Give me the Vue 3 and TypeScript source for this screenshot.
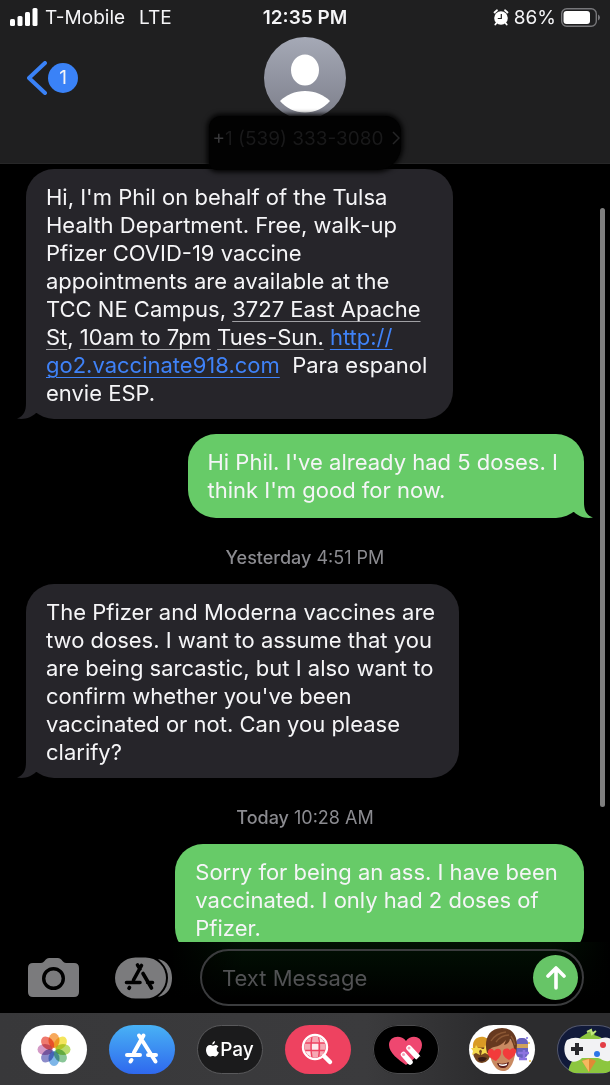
<script setup lang="ts">
import { ref } from 'vue'

interface Part {
  text: string
  kind?: 'data' | 'url'
}
interface Message {
  id: number
  from: 'them' | 'me'
  size: string
  tail: boolean
  stamp?: { day: string; time: string }
  lines: Part[][]
}

const plain = (...rows: string[]): Part[][] => rows.map((text) => [{ text }])

const messages: Message[] = [
  {
    id: 1,
    from: 'them',
    size: 'w70',
    tail: true,
    lines: [
      ...plain(
        "Hi, I'm Phil on behalf of the Tulsa",
        'Health Department. Free, walk-up',
        'Pfizer COVID-19 vaccine',
        'appointments are available at the',
      ),
      [{ text: 'TCC NE Campus, ' }, { text: '3727 East Apache', kind: 'data' }],
      [
        { text: 'St', kind: 'data' },
        { text: ', ' },
        { text: '10am to 7pm', kind: 'data' },
        { text: ' ' },
        { text: 'Tues-Sun.', kind: 'data' },
        { text: ' ' },
        { text: 'http://', kind: 'url' },
      ],
      [{ text: 'go2.vaccinate918.com', kind: 'url' }, { text: '  Para espanol' }],
      [{ text: 'envie ESP.' }],
    ],
  },
  {
    id: 2,
    from: 'me',
    size: 'w65',
    tail: true,
    lines: plain("Hi Phil. I've already had 5 doses. I", "think I'm good for now."),
  },
  {
    id: 3,
    from: 'them',
    size: 'w71',
    tail: true,
    stamp: { day: 'Yesterday', time: '4:51 PM' },
    lines: plain(
      'The Pfizer and Moderna vaccines are',
      'two doses. I want to assume that you',
      'are being sarcastic, but I also want to',
      "confirm whether you've been",
      'vaccinated or not. Can you please',
      'clarify?',
    ),
  },
  {
    id: 4,
    from: 'me',
    size: 'w67',
    tail: false,
    stamp: { day: 'Today', time: '10:28 AM' },
    lines: plain('Sorry for being an ass. I have been', 'vaccinated. I only had 2 doses of', 'Pfizer.'),
  },
]

const petals = ['#f6a04a', '#f3e34a', '#b2d95c', '#7cc08c', '#70aee6', '#7f7fc4', '#cf8fc0', '#ee6a5e']
const draft = ref('')
</script>

<template>
  <div class="phone">
    <header class="top">
      <div class="status">
        <div class="side">
          <svg class="signal" viewBox="0 0 28 18" aria-hidden="true">
            <rect x="0" y="11" width="5" height="7" rx="1.5" />
            <rect x="7.500" y="8" width="5" height="10" rx="1.5" />
            <rect x="15" y="4" width="5" height="14" rx="1.5" />
            <rect x="22.500" y="0" width="5" height="18" rx="1.5" />
          </svg>
          <span>T-Mobile</span>
          <span class="net">LTE</span>
        </div>
        <strong class="clock">12:35 PM</strong>
        <div class="side end">
          <svg class="alarm" viewBox="0 0 16 17" aria-hidden="true">
            <circle cx="8" cy="9" r="6.800" fill="#fff" />
            <path d="M1.500 3.500 4 1.300M14.500 3.500 12 1.300M3.500 14 2.300 15.500M12.500 14 13.700 15.500" stroke="#fff" stroke-width="1.800" stroke-linecap="round" />
            <path d="M8.300 5V9.500H4.800" stroke="#1f1f20" stroke-width="1.200" fill="none" />
          </svg>
          <span>86%</span>
          <svg class="battery" viewBox="0 0 39 19" aria-hidden="true">
            <rect x="0.700" y="0.700" width="34.600" height="17.600" rx="5" fill="none" stroke="#77777a" stroke-width="1.400" />
            <rect x="2.500" y="3" width="26.500" height="13" rx="3" fill="#fff" />
            <path d="M37 6.500q2 1 2 3t-2 3z" fill="#77777a" />
          </svg>
        </div>
      </div>
      <div class="nav">
        <button class="back" aria-label="Back, 1 unread">
          <svg viewBox="0 0 20 34" aria-hidden="true">
            <path d="M18 2 2 17 18 32" fill="none" stroke="#3a82f7" stroke-width="4" stroke-linecap="round" stroke-linejoin="round" />
          </svg>
          <span class="unread">1</span>
        </button>
        <div class="contact">
          <svg class="avatar" viewBox="0 0 82 82" aria-hidden="true">
            <defs>
              <linearGradient id="av" x1="0" y1="0" x2="0" y2="1">
                <stop offset="0" stop-color="#a5a9b6" />
                <stop offset="1" stop-color="#7d7f8b" />
              </linearGradient>
            </defs>
            <circle cx="41" cy="41" r="41" fill="url(#av)" />
            <ellipse cx="41" cy="33" rx="14" ry="15.500" fill="#fff" />
            <path d="M16 64C22 58 31 54 41 54S60 58 66 64C60 71 51 75.500 41 75.500S22 71 16 64Z" fill="#fff" />
          </svg>
          <div class="number">
            <span><b>+</b>1 (539) 333-3080</span>
            <svg viewBox="0 0 8 14" aria-hidden="true"><path d="M1 1 7 7 1 13" fill="none" stroke="#252526" stroke-width="1.500" /></svg>
          </div>
        </div>
      </div>
    </header>

    <main class="thread">
      <template v-for="m in messages" :key="m.id">
        <p v-if="m.stamp" class="stamp"><b>{{ m.stamp.day }}</b> {{ m.stamp.time }}</p>
        <div class="bubble" :class="[m.from, m.size]">
          <p v-for="(line, i) in m.lines" :key="i" class="line"><template v-for="(part, j) in line" :key="j"><a v-if="part.kind" href="#" :class="part.kind">{{ part.text }}</a><template v-else>{{ part.text }}</template></template></p>
          <svg v-if="m.tail" class="tail" viewBox="0 0 30 32" aria-hidden="true">
            <path d="M9 0V16C9 24 7 29 0 31.500C8 33 15 30 19 26L30 27V0Z" />
          </svg>
        </div>
      </template>
      <div class="scroll" aria-hidden="true"></div>
    </main>

    <form class="composer" @submit.prevent>
      <button type="button" class="tool" aria-label="Camera">
        <svg width="51" height="40" viewBox="0 0 51 40">
          <path d="M5 5H13Q15 5 16.500 3L17.500 1.700Q19 0 21 0H30Q32 0 33.500 1.700L34.500 3Q36 5 38 5H46Q51 5 51 10V34Q51 39 46 39H5Q0 39 0 34V10Q0 5 5 5Z" fill="#7b7b7d" />
          <circle cx="25.500" cy="20.500" r="9.800" fill="none" stroke="#000" stroke-width="3.400" />
        </svg>
      </button>
      <button type="button" class="tool store" aria-label="Apps">
        <svg width="58" height="42" viewBox="0 0 58 42">
          <path d="M43 2C53 4 57 12 57 21S53 38 43 40C48 35 51 29 51 21S48 7 43 2Z" fill="#7b7b7d" />
          <rect x="-1" y="-1" width="54" height="44" rx="22" fill="#000" />
          <rect x="0" y="0.500" width="51" height="41" rx="20.500" fill="#7b7b7d" />
          <g stroke="#000" stroke-width="3.600" stroke-linecap="round" fill="none">
            <path d="M26.500 8.500 18.500 23M22.500 8 25 12M28 16.500 36.500 31M11.500 25.500H25M32.500 25.500H37.500M14.500 30.500 14 31.300" />
          </g>
        </svg>
      </button>
      <div class="field">
        <input v-model="draft" type="text" aria-label="Text Message" placeholder="Text Message" />
        <button class="send" aria-label="Send">
          <svg width="20" height="24" viewBox="0 0 20 24">
            <path d="M10 22V2.500M2 10 10 2 18 10" fill="none" stroke="#fff" stroke-width="3.600" stroke-linecap="round" stroke-linejoin="round" />
          </svg>
        </button>
      </div>
    </form>

    <nav class="drawer" aria-label="Message apps">
      <button class="app photos" aria-label="Photos">
        <svg viewBox="0 0 66 48">
          <ellipse v-for="(c, i) in petals" :key="c" class="petal" cx="33" cy="15.500" rx="5.500" ry="7.500" :fill="c" :transform="`rotate(${i * 45} 33 24.500)`" />
        </svg>
      </button>
      <button class="app appstore" aria-label="App Store">
        <svg viewBox="0 0 66 48">
          <g stroke="#fff" stroke-width="4" stroke-linecap="round" fill="none">
            <path d="M34.500 10.500 25 27.500M30 10.500 46.500 36.500M18 30H31M39 30H47M22.500 35 21.500 36.500" />
          </g>
        </svg>
      </button>
      <button class="app pay" aria-label="Apple Pay">
        <svg class="apple" viewBox="0 0 13 16">
          <path d="M9 0C9.200 1.800 7.900 3.400 6.300 3.500C6.100 1.900 7.400.3 9 0ZM6.600 4.700C7.400 4.700 8.300 3.900 9.500 3.900C10.700 3.900 11.800 4.500 12.400 5.400C9.900 6.900 10.300 10.300 12.900 11.300C12.200 13.200 11 15.500 9.400 15.500C8.400 15.500 8 14.900 6.800 14.900S5.200 15.500 4.200 15.500C2.100 15.500 0 12 0 9C0 5.700 2 4 4 4C5.200 4 6 4.700 6.600 4.700Z" fill="#fff" />
        </svg>
        <span>Pay</span>
      </button>
      <button class="app images" aria-label="Images">
        <svg viewBox="0 0 66 48">
          <defs><clipPath id="lens"><circle cx="30" cy="22" r="10.500" /></clipPath></defs>
          <g clip-path="url(#lens)">
            <rect x="19" y="11" width="22" height="22" fill="#f6a8b4" />
            <path d="M27 18H33V25H27ZM33 11H41V18H33ZM19 25H27V33H19Z" fill="#fde9ec" />
            <path d="M27 11Q25 22 27 33M33.500 11Q35.500 22 33.500 33M19 18H41M19 25.500H41" stroke="#ee4260" stroke-width="1.400" fill="none" />
          </g>
          <circle cx="30" cy="22" r="12" fill="none" stroke="#fff" stroke-width="2.400" />
          <path d="M39 31 45 37" stroke="#fff" stroke-width="4.500" stroke-linecap="round" />
        </svg>
      </button>
      <button class="app touch" aria-label="Digital Touch">
        <svg viewBox="0 0 66 48">
          <path d="M33 40C26 35 16 28 16 20C16 11 28 9 33 16C38 9 49 11 49 20C49 28 40 35 33 40Z" fill="#ef4770" />
          <path d="M30.500 29.500 37 37M36 23 44.500 32" stroke="#fff" stroke-width="5.500" stroke-linecap="round" />
          <circle cx="30.500" cy="29.500" r="1.500" fill="#f6a0b5" /><circle cx="36" cy="23" r="1.500" fill="#f6a0b5" />
          <path d="M41 39 48 32" stroke="#000" stroke-width="3" />
        </svg>
      </button>
      <span class="rule"></span>
      <button class="app memoji" aria-label="Memoji">
        <svg viewBox="0 0 66 48">
          <ellipse cx="13" cy="27" rx="9" ry="11" fill="#75461f" />
          <path d="M4 23C3 14 9 11 15 12L22 15V22Z" fill="#d99b25" />
          <path d="M7 20 9 23 13 23 10 26 11 30 7 28 3 30 4 26 2 23 6 23ZM16 20 18 24H21L19 27 20 30 16 28 12 30 13 26 11 24H15Z" fill="#f5d84c" />
          <path d="M9 33Q13 31 18 33 15 38 10 36Z" fill="#3a1b16" />
          <rect x="47" y="13" width="12" height="20" rx="5" fill="#6861bd" />
          <path d="M47 19H59V23H47Z" fill="#d0a25a" /><path d="M49 28H60M55 25V35M50 34H58" stroke="#8d74e0" stroke-width="2.500" />
          <circle cx="60" cy="18" r="1" fill="#e5bd48" /><circle cx="58" cy="13" r="1" fill="#7b6ee0" /><circle cx="61" cy="36" r="1" fill="#e5bd48" />
          <path d="M21 18Q33 8 46 18V30Q43 46 34 46T21 31Z" fill="#c98a61" />
          <path d="M18 28C15 17 18 3 33 3C46 3 50 15 47 28L45 25C45 20 43 16 41 14Q40 19 35 20L37 15Q32 21 25 22 20 23 20 28Z" fill="#67391f" />
          <path d="M22 16Q27 8 37 7M27 17Q32 10 40 10M42 11Q45 15 46 20" stroke="#8b5734" stroke-width="1.300" fill="none" />
          <path d="M27 36C22 34 17 30 19 26C20 23 24 23 25 26C28 22 33 24 32 28C32 31 29 34 27 36ZM40 35C36 33 33 30 34 26C35 23 39 23 41 25C43 22 48 23 47 27C46 31 43 33 40 35Z" fill="#f23b3b" />
          <path d="M28 38Q34 40 40 37 39 43 34 43T28 38Z" fill="#5b1e1b" /><path d="M30 39Q34 40 38 38.500V40Q34 42 30 40Z" fill="#fff" />
        </svg>
      </button>
      <button class="app pigeon" aria-label="GamePigeon">
        <svg viewBox="0 0 66 48">
          <path d="M20 16C23 12 30 8 35 6Q39 9 37 10C44 12 47 14 50 18H20ZM11 48Q13 32 25 31H48Q56 36 58 48Z" fill="#8cc63f" />
          <path d="M30 7 34 5 35 9 39 6" stroke="#c0e77b" stroke-width="2" fill="none" />
          <path d="M10 15Q18 11 24 14H42Q50 10 57 16C62 24 60 35 52 36C47 37 45 34 41 33H25C20 38 13 38 10 33C6 27 7 19 10 15Z" fill="#f2f2f4" />
          <path d="M14 24H26M20 18V30" stroke="#29292d" stroke-width="4" />
          <circle cx="46" cy="20" r="3" fill="#e33d46" /><circle cx="40" cy="29" r="3" fill="#2c76e8" />
          <path d="M25 36Q32 31 39 36L32 47Z" fill="#e08a35" /><path d="M32 34V47L25 36Z" fill="#f6b85f" />
        </svg>
      </button>
    </nav>
  </div>
</template>

<style>
body {
  background: #000;
}
</style>

<style scoped>
.phone {
  height: 100vh;
  display: flex;
  flex-direction: column;
  overflow: hidden;
  background: #000;
  color: #f5f5f7;
  font-family: Inter, Roboto, "Liberation Sans", sans-serif;
}
button {
  border: 0;
  padding: 0;
  margin: 0;
  background: none;
  color: inherit;
  font: inherit;
}
svg {
  display: block;
}
.top {
  flex: none;
  background: #1f1f20;
  border-bottom: 1px solid #272728;
}
.status {
  display: grid;
  grid-template-columns: 1fr auto 1fr;
  align-items: center;
  height: 34px;
  padding: 0 10px;
  font-size: 19px;
}
.side {
  display: flex;
  align-items: center;
  gap: 7px;
}
.end {
  justify-content: flex-end;
  gap: 5px;
}
.net {
  margin-left: 7px;
}
.clock {
  font-weight: 600;
}
.signal {
  width: 28px;
  height: 18px;
  fill: #fff;
}
.alarm {
  width: 16px;
  height: 17px;
}
.battery {
  width: 39px;
  height: 19px;
}
.nav {
  display: grid;
  grid-template-columns: 1fr auto 1fr;
  height: 129px;
  padding-top: 3px;
  box-sizing: border-box;
}
.back {
  display: flex;
  align-items: center;
  gap: 1px;
  height: 82px;
  padding-left: 27px;
}
.back svg {
  width: 20px;
  height: 34px;
}
.unread {
  width: 30px;
  height: 30px;
  line-height: 30px;
  border-radius: 50%;
  background: #3a82f7;
  font-size: 19px;
}
.contact {
  position: relative;
  width: 82px;
  display: flex;
  flex-direction: column;
  align-items: center;
}
.avatar {
  width: 82px;
  height: 82px;
  flex: none;
}
.number {
  position: absolute;
  top: 79px;
  z-index: 2;
  display: flex;
  align-items: center;
  justify-content: center;
  gap: 8px;
  width: 192px;
  height: 54px;
  padding: 0 0 10px 2px;
  box-sizing: border-box;
  border-radius: 12px 16px 24px 8px;
  background: #020202;
  box-shadow: 0 0 5px 2px #020202;
  color: #19191a;
  font-size: 19px;
  white-space: nowrap;
}
.number b {
  font-weight: 400;
  color: #38383a;
}
.number svg {
  width: 8px;
  height: 14px;
}
.thread {
  flex: 1;
  min-height: 0;
  position: relative;
  overflow: hidden;
  display: flex;
  flex-direction: column;
  padding: 5px 26px 0;
}
.bubble {
  position: relative;
  flex: none;
  box-sizing: border-box;
  padding: 14px 0 12px 20px;
  border-radius: 28px;
  font-size: 22px;
  line-height: 28px;
  white-space: pre;
}
.bubble + .bubble {
  margin-top: 15px;
}
.line {
  margin: 0;
}
.them {
  align-self: flex-start;
  background: #26252a;
  fill: #26252a;
}
.me {
  align-self: flex-end;
  padding-bottom: 14px;
  background: #67cb68;
  fill: #67cb68;
}
.w65 {
  width: 65vw;
}
.w67 {
  width: 67vw;
}
.w70 {
  width: 70vw;
}
.w71 {
  width: 71vw;
}
.tail {
  position: absolute;
  bottom: 0;
  left: -9px;
  width: 30px;
  height: 32px;
}
.me .tail {
  left: auto;
  right: -9px;
  transform: scaleX(-1);
}
.data {
  color: inherit;
  text-decoration: underline #a0a0a4 1px;
  text-underline-offset: 4px;
}
.url {
  color: #3f82f7;
  text-decoration: underline 1px;
  text-underline-offset: 4px;
}
.stamp {
  flex: none;
  margin: 28px 0 14px;
  text-align: center;
  font-size: 18px;
  line-height: 24px;
  color: #8b8b90;
}
.stamp b {
  font-weight: 500;
}
.scroll {
  position: absolute;
  top: 44px;
  right: 5px;
  width: 5px;
  height: 77%;
  border-radius: 3px;
  background: #7f7f7f;
}
.composer {
  flex: none;
  display: flex;
  align-items: center;
  height: 71px;
  padding: 0 26px 0 28px;
  box-sizing: border-box;
  background: linear-gradient(90deg, #000 28%, transparent 40%, transparent 90%, #000), linear-gradient(#021104, #000 80%);
}
.store {
  margin: 0 27px 0 36px;
}
.field {
  flex: 1;
  min-width: 0;
  display: flex;
  align-items: center;
  height: 57px;
  box-sizing: border-box;
  padding: 0 4px 0 20px;
  border: 2px solid #3b3c3e;
  border-radius: 29px;
}
.field input {
  flex: 1;
  min-width: 0;
  border: 0;
  padding: 0;
  outline: 0;
  background: none;
  color: #fff;
  font: inherit;
  font-size: 22px;
}
.field input::placeholder {
  color: #515254;
  opacity: 1;
}
.send {
  display: grid;
  place-items: center;
  width: 45px;
  height: 45px;
  border-radius: 50%;
  background: #67c567;
}
.drawer {
  flex: none;
  display: flex;
  align-items: center;
  gap: 22px;
  height: 72px;
  padding-left: 21px;
  overflow: hidden;
  background: linear-gradient(90deg, #38383a, #3b3b3d 60%, #2c2c2e 80%);
}
.app {
  flex: none;
  position: relative;
  width: 66px;
  height: 49px;
  border-radius: 25px;
  overflow: hidden;
}
.photos,
.memoji {
  background: #fff;
}
.petal {
  mix-blend-mode: multiply;
  opacity: 0.9;
}
.appstore {
  background: linear-gradient(#48b2f5, #2f68ee);
}
.pay {
  display: flex;
  align-items: center;
  justify-content: center;
  gap: 1px;
  box-sizing: border-box;
  border: 1px solid #59595b;
  background: #1b1b1c;
  color: #fff;
  font-size: 19px;
  font-weight: 500;
}
.apple {
  width: 13px;
  height: 16px;
}
.images {
  background: #ee4260;
}
.touch {
  background: #000;
  box-shadow: inset 0 0 0 1px #4a4a4c;
}
.rule {
  width: 1px;
  height: 42px;
  margin: 0 -7px;
  background: #565658;
}
.pigeon {
  background: #111a3a;
  box-shadow: inset 0 0 0 1px #55586a;
}
</style>
